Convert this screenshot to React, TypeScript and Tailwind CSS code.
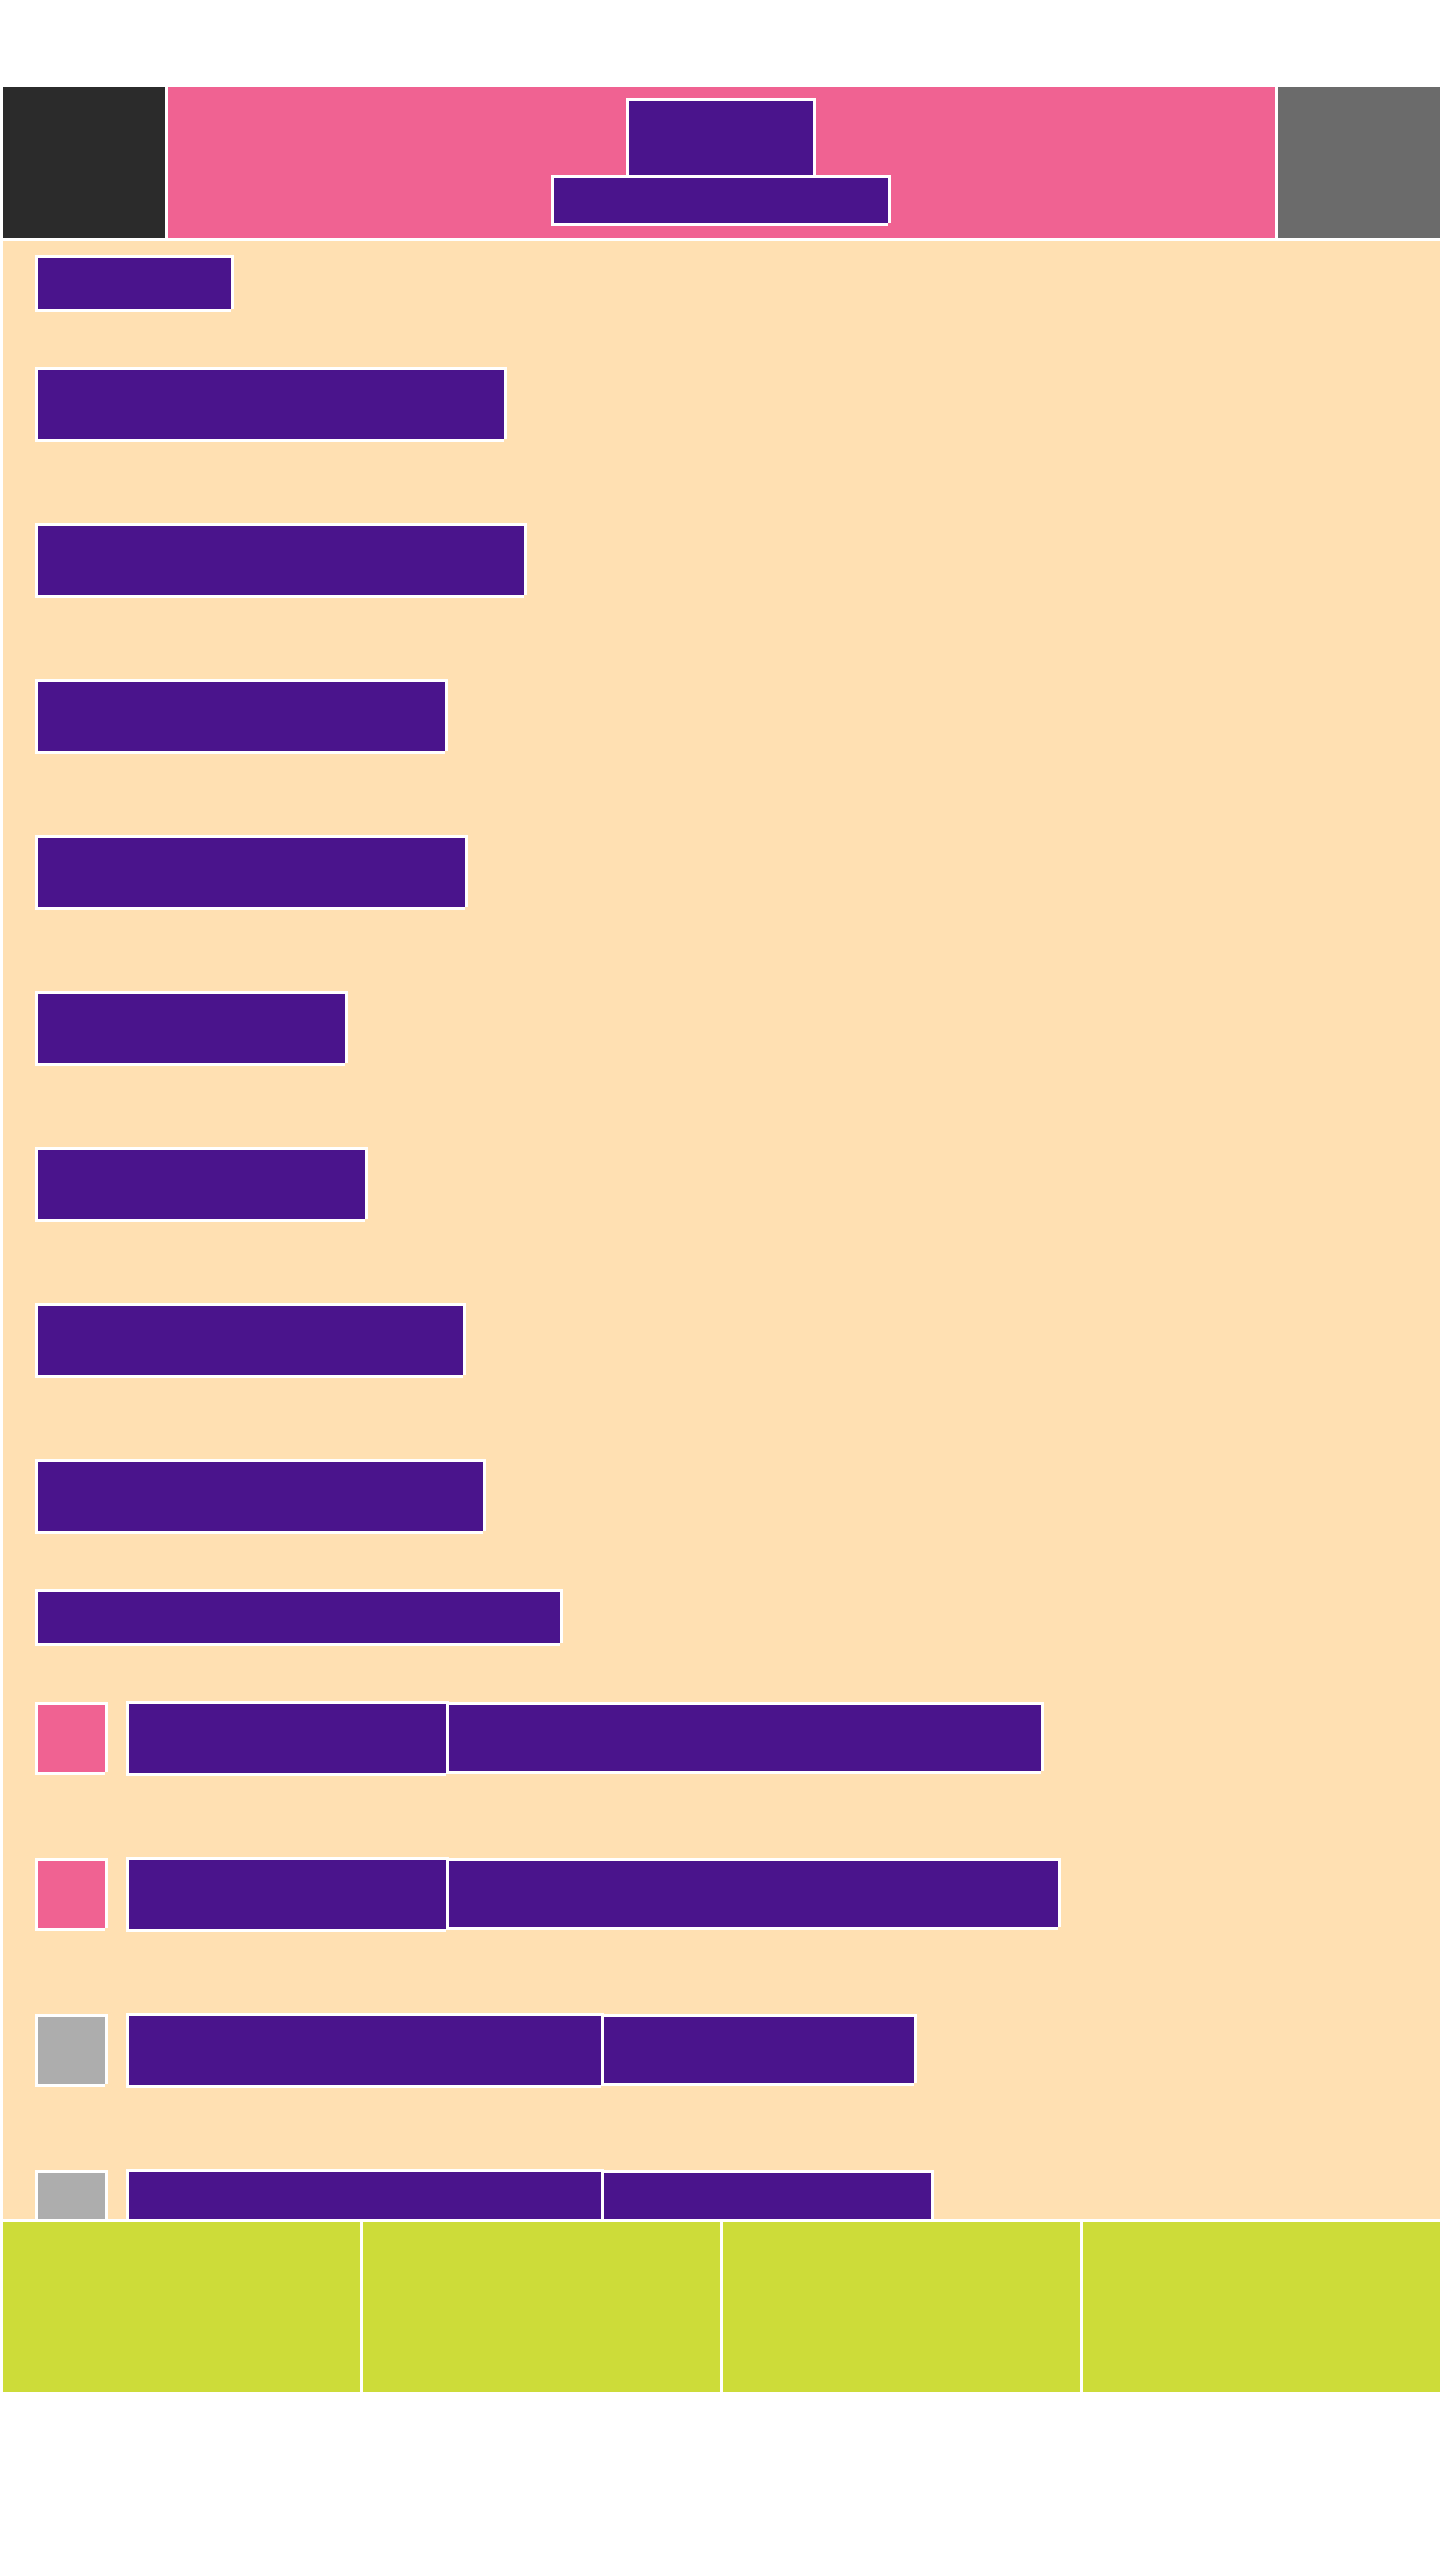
type BlockProps = { className: string };

// A flat block with a 3px white outline whose bottom-right corner stays open.
function Block({ className }: BlockProps) {
  return (
    <div
      className={`shrink-0 shadow-[-3px_-3px_0_#fff,3px_-3px_0_#fff,-3px_3px_0_#fff,3px_0_0_#fff,0_3px_0_#fff] ${className}`}
    />
  );
}

const settings = [
  "w-[466px]",
  "w-[486px]",
  "w-[407px]",
  "w-[427px]",
  "w-[307px]",
  "w-[327px]",
  "w-[425px]",
  "w-[445px]",
];

const entries = [
  { icon: "bg-[#f06292]", name: "w-[317px]", detail: "w-[592px]" },
  { icon: "bg-[#f06292]", name: "w-[317px]", detail: "w-[609px]" },
  { icon: "bg-[#adadad]", name: "w-[472px]", detail: "w-[310px]" },
  { icon: "bg-[#adadad]", name: "w-[472px]", detail: "w-[327px]" },
];

const tabs = ["First tab", "Second tab", "Third tab", "Fourth tab"];

function SectionHeading({ className }: BlockProps) {
  return (
    <div className="py-[17px]">
      <Block className={`h-[51px] bg-[#4a148c] ${className}`} />
    </div>
  );
}

export default function App() {
  return (
    <div className="flex h-screen flex-col bg-white pt-[87px] pb-[168px]">
      <header className="flex shrink-0 gap-[3px] pl-[3px]">
        <button type="button" aria-label="Back" className="w-[162px] shrink-0 bg-[#2b2b2b]" />
        <div className="flex min-w-0 flex-1 flex-col items-center gap-[3px] bg-[#f06292] pt-[14px] pr-px pb-[15px]">
          <Block className="h-[74px] w-[184px] bg-[#4a148c]" />
          <Block className="h-[45px] w-[334px] bg-[#4a148c]" />
        </div>
        <button type="button" aria-label="Menu" className="w-[162px] shrink-0 bg-[#6b6b6b]" />
      </header>

      <main className="my-[3px] ml-[3px] flex min-h-0 flex-1 flex-col gap-px overflow-y-auto bg-[#ffe0b2] pl-[35px] [scrollbar-width:none]">
        <section className="shrink-0">
          <SectionHeading className="w-[193px]" />
          <ul>
            {settings.map((width) => (
              <li key={width} className="pt-[44px] pb-[43px]">
                <Block className={`h-[69px] bg-[#4a148c] ${width}`} />
              </li>
            ))}
          </ul>
        </section>
        <section className="shrink-0">
          <SectionHeading className="w-[522px]" />
          <ul>
            {entries.map((entry, index) => (
              <li key={index} className="flex items-center gap-6 pt-[44px] pb-[43px]">
                <Block className={`size-[67px] ${entry.icon}`} />
                <div className="flex items-center gap-[3px]">
                  <Block className={`h-[69px] bg-[#4a148c] ${entry.name}`} />
                  <Block className={`mb-px h-[66px] bg-[#4a148c] ${entry.detail}`} />
                </div>
              </li>
            ))}
          </ul>
        </section>
      </main>

      <nav className="grid shrink-0 grid-cols-4">
        {tabs.map((tab) => (
          <button
            key={tab}
            type="button"
            aria-label={tab}
            className="h-[170px] border-l-[3px] border-white bg-[#cddc39]"
          />
        ))}
      </nav>
    </div>
  );
}
